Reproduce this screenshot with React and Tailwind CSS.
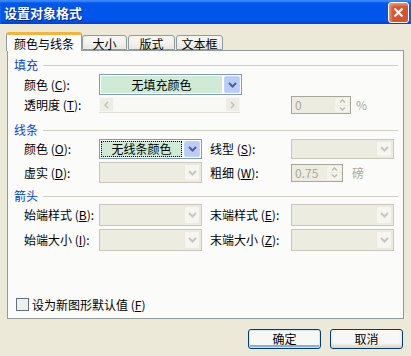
import React from 'react'
import clsx from 'clsx'

const Chevron = ({ color }) => (
  <svg width="9" height="6" viewBox="0 0 9 6">
    <path d="M1 1L4.5 4.5L8 1" fill="none" stroke={color} strokeWidth="2" />
  </svg>
)

const Arrow = ({ dir, color }) => (
  <svg width="5" height="8" viewBox="0 0 5 8">
    <path d={dir === 'left' ? 'M4 1L1 4L4 7' : 'M1 1L4 4L1 7'} fill="none" stroke={color} strokeWidth="1.5" />
  </svg>
)

const SmallChevron = ({ up }) => (
  <svg width="7" height="4" viewBox="0 0 7 4">
    <path d={up ? 'M1 3.5L3.5 1L6 3.5' : 'M1 0.5L3.5 3L6 0.5'} fill="none" stroke="#BDBAAE" strokeWidth="1.3" />
  </svg>
)

const Label = ({ text, k, className }) => (
  <div className={clsx('leading-[14px] whitespace-nowrap', className)}>
    {text} (<span className="underline">{k}</span>):
  </div>
)

const Header = ({ title }) => (
  <div className="h-[16px] flex items-center pl-[6px] pr-[5px]">
    <span className="text-[#0046D5] leading-[14px]">{title}</span>
    <div className="flex-1 h-px bg-[#D0D0BF] ml-[5px]"></div>
  </div>
)

const Combo = ({ className, disabled, children }) => (
  <div
    className={clsx(
      'flex border',
      className,
      disabled ? 'border-[#C9C7BA] bg-[#EDECE0]' : 'border-[#7F9DB9] bg-white'
    )}
  >
    <div className="flex-1 flex items-stretch">{children}</div>
    <div
      className={clsx(
        'w-[16px] m-px flex items-center justify-center',
        disabled
          ? 'bg-[#F6F5F0] border border-[#ECEAE0]'
          : 'bg-[#BACDF8] border border-[#C4D4F9] rounded-[2px]'
      )}
    >
      <Chevron color={disabled ? '#C9C7BA' : '#4D6185'} />
    </div>
  </div>
)

const Spin = ({ className, value }) => (
  <div className={clsx('flex border border-[#A9A79C] bg-[#EDECE0]', className)}>
    <div className="flex-1 pl-[3px] flex items-center text-[#ACA899] leading-[14px]">{value}</div>
    <div className="w-[14px] m-px flex flex-col gap-px">
      <div className="flex-1 bg-[#F4F3EE] flex items-center justify-center rounded-t-[2px]">
        <SmallChevron up />
      </div>
      <div className="flex-1 bg-[#F4F3EE] flex items-center justify-center rounded-b-[2px]">
        <SmallChevron />
      </div>
    </div>
  </div>
)

const Slider = () => (
  <div className="w-[141px] h-[16px] flex bg-[#F8F8F4] border-b border-[#E2E0D4]">
    <div className="w-[15px] h-[15px] bg-[#EEEDE5] border border-[#F7F6F1] flex items-center justify-center">
      <Arrow dir="left" color="#C3C1B5" />
    </div>
    <div className="flex-1"></div>
    <div className="w-[15px] h-[15px] bg-[#EEEDE5] border border-[#F7F6F1] flex items-center justify-center">
      <Arrow dir="right" color="#C3C1B5" />
    </div>
  </div>
)

const Tab = ({ children, className, selected }) => (
  <div
    className={clsx(
      'flex items-center justify-center border border-[#919B9C] rounded-t-[3px] leading-[14px]',
      selected
        ? 'relative z-10 h-[19px] bg-[#FCFCFE] border-b-0 border-t-[3px] border-t-[#F6B33A] pt-[1px]'
        : 'h-[15px] mb-px bg-[#F6F5F2] shadow-[inset_0_-4px_4px_#E8E7E1] pt-[2px]',
      className
    )}
  >
    {children}
  </div>
)

const Button = ({ children, primary }) => (
  <div
    className={clsx(
      'w-[73px] h-[20px] border border-[#003C74] rounded-[3px] flex items-center justify-center leading-[14px] bg-[#F7F7F3]',
      primary
        ? 'shadow-[inset_0_0_0_1px_#CEE7FF,inset_0_-2px_0_1px_#89ADE4]'
        : 'shadow-[inset_0_-3px_3px_#DCD8CC]'
    )}
  >
    {children}
  </div>
)

function TitleBar() {
  return (
    <header className="h-[24px] flex items-center justify-between pl-[4px] pr-[2px] bg-[#0055EA] shadow-[inset_0_2px_2px_#3D8CF7,inset_0_-2px_2px_#0046D2] text-white">
      <span className="font-bold text-[13px] leading-[15px] [text-shadow:1px_1px_#0A1E8C]">设置对象格式</span>
      <span className="w-[21px] h-[21px] rounded-[3px] border border-white bg-[#D6532F] shadow-[inset_2px_2px_3px_#EC9A7C] flex items-center justify-center">
        <svg width="11" height="11" viewBox="0 0 11 11">
          <path d="M1.5 1.5L9.5 9.5M9.5 1.5L1.5 9.5" stroke="white" strokeWidth="2.2" />
        </svg>
      </span>
    </header>
  )
}

export default function App() {
  return (
    <div className="w-[411px] h-[356px] overflow-hidden bg-[#ECE9D8] text-[12px] text-black font-['Noto_Sans_CJK_SC','Noto_Sans',sans-serif]">
      <TitleBar />

      <div className="flex items-end pt-[8px] pl-[6px]">
        <Tab selected className="w-[76px]">颜色与线条</Tab>
        <Tab className="w-[45px]">大小</Tab>
        <Tab className="w-[47px] ml-[1px]">版式</Tab>
        <Tab className="w-[47px] ml-[1px]">文本框</Tab>
      </div>

      <div className="-mt-px mx-[7px] h-[269px] border border-[#919B9C] bg-[#FBFBFA] flex flex-col">
        <div className="mt-[6px]">
          <Header title="填充" />
        </div>
        <div className="mt-[1px] h-[21px] flex items-center">
          <Label text="颜色" k="C" className="ml-[16px] w-[75px]" />
          <Combo className="w-[143px] h-[21px]">
            <div className="flex-1 bg-[#CFEBD3] m-px flex items-center justify-center leading-[14px]">
              无填充颜色
            </div>
          </Combo>
        </div>
        <div className="mt-[1px] h-[18px] flex items-center">
          <Label text="透明度" k="T" className="ml-[16px] w-[75px]" />
          <Slider />
          <Spin className="ml-[51px] w-[60px] h-[18px]" value="0" />
          <span className="ml-[5px] text-[#ACA899] leading-[14px]">%</span>
        </div>

        <div className="mt-[8px]">
          <Header title="线条" />
        </div>
        <div className="mt-[1px] h-[20px] flex items-center">
          <Label text="颜色" k="O" className="ml-[16px] w-[75px]" />
          <div className="w-[103px] h-[20px] flex border border-[#7F9DB9] bg-white">
            <div className="flex-1 p-px flex">
              <div className="flex-1 bg-[#CFEBD3] border border-dotted border-black flex items-center justify-center leading-[14px]">
                无线条颜色
              </div>
            </div>
            <div className="w-[16px] m-px flex items-center justify-center bg-[#BACDF8] border border-[#C4D4F9] rounded-[2px]">
              <Chevron color="#4D6185" />
            </div>
          </div>
          <Label text="线型" k="S" className="ml-[8px] w-[81px]" />
          <Combo disabled className="w-[103px] h-[20px]" />
        </div>
        <div className="mt-[3px] h-[21px] flex items-center">
          <Label text="虚实" k="D" className="ml-[16px] w-[75px]" />
          <Combo disabled className="w-[103px] h-[21px]" />
          <Label text="粗细" k="W" className="ml-[8px] w-[81px]" />
          <Spin className="w-[52px] h-[18px]" value="0.75" />
          <span className="ml-[9px] text-[#ACA899] leading-[14px]">磅</span>
        </div>

        <div className="mt-[5px]">
          <Header title="箭头" />
        </div>
        <div className="h-[22px] flex items-center">
          <Label text="始端样式" k="B" className="ml-[16px] w-[75px]" />
          <Combo disabled className="w-[103px] h-[22px]" />
          <Label text="末端样式" k="E" className="ml-[8px] w-[81px]" />
          <Combo disabled className="w-[103px] h-[22px]" />
        </div>
        <div className="mt-[3px] h-[22px] flex items-center">
          <Label text="始端大小" k="I" className="ml-[16px] w-[75px]" />
          <Combo disabled className="w-[103px] h-[22px]" />
          <Label text="末端大小" k="Z" className="ml-[8px] w-[81px]" />
          <Combo disabled className="w-[103px] h-[22px]" />
        </div>

        <div className="mt-[47px] h-[13px] flex items-center pl-[8px]">
          <div className="w-[13px] h-[13px] border border-[#5E7186] bg-[#EFEFEA]"></div>
          <span className="ml-[3px] leading-[14px]">
            设为新图形默认值 (<span className="underline">F</span>)
          </span>
        </div>
      </div>

      <div className="mt-[10px] flex justify-end gap-[9px] pr-[8px]">
        <Button primary>确定</Button>
        <Button>取消</Button>
      </div>
    </div>
  )
}
